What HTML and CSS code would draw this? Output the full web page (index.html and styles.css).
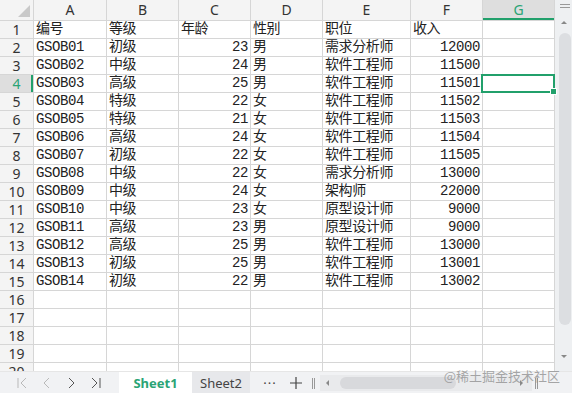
FILE: index.html
```html
<!DOCTYPE html>
<html lang="zh-CN">
<head>
    <meta charset="UTF-8">
    <meta name="viewport" content="width=device-width, initial-scale=1.0">
    <title>Sheet1</title>
    <link rel="stylesheet" href="styles.css">
</head>
<body>
<div class="app">
    <div class="main">
        <div class="sheet">
            <div class="hd corner"></div>
            <div class="hd col">A</div>
            <div class="hd col">B</div>
            <div class="hd col">C</div>
            <div class="hd col">D</div>
            <div class="hd col">E</div>
            <div class="hd col">F</div>
            <div class="hd col sel">G</div>

            <div class="hd row">1</div>
            <div class="c">编号</div><div class="c">等级</div><div class="c">年龄</div><div class="c">性别</div><div class="c">职位</div><div class="c">收入</div><div class="c"></div>

            <div class="hd row">2</div>
            <div class="c">GSOB01</div><div class="c">初级</div><div class="c n">23</div><div class="c">男</div><div class="c">需求分析师</div><div class="c n">12000</div><div class="c"></div>

            <div class="hd row">3</div>
            <div class="c">GSOB02</div><div class="c">中级</div><div class="c n">24</div><div class="c">男</div><div class="c">软件工程师</div><div class="c n">11500</div><div class="c"></div>

            <div class="hd row sel">4</div>
            <div class="c">GSOB03</div><div class="c">高级</div><div class="c n">25</div><div class="c">男</div><div class="c">软件工程师</div><div class="c n">11501</div><div class="c active"></div>

            <div class="hd row">5</div>
            <div class="c">GSOB04</div><div class="c">特级</div><div class="c n">22</div><div class="c">女</div><div class="c">软件工程师</div><div class="c n">11502</div><div class="c"></div>

            <div class="hd row">6</div>
            <div class="c">GSOB05</div><div class="c">特级</div><div class="c n">21</div><div class="c">女</div><div class="c">软件工程师</div><div class="c n">11503</div><div class="c"></div>

            <div class="hd row">7</div>
            <div class="c">GSOB06</div><div class="c">高级</div><div class="c n">24</div><div class="c">女</div><div class="c">软件工程师</div><div class="c n">11504</div><div class="c"></div>

            <div class="hd row">8</div>
            <div class="c">GSOB07</div><div class="c">初级</div><div class="c n">22</div><div class="c">女</div><div class="c">软件工程师</div><div class="c n">11505</div><div class="c"></div>

            <div class="hd row">9</div>
            <div class="c">GSOB08</div><div class="c">中级</div><div class="c n">22</div><div class="c">女</div><div class="c">需求分析师</div><div class="c n">13000</div><div class="c"></div>

            <div class="hd row">10</div>
            <div class="c">GSOB09</div><div class="c">中级</div><div class="c n">24</div><div class="c">女</div><div class="c">架构师</div><div class="c n">22000</div><div class="c"></div>

            <div class="hd row">11</div>
            <div class="c">GSOB10</div><div class="c">中级</div><div class="c n">23</div><div class="c">女</div><div class="c">原型设计师</div><div class="c n">9000</div><div class="c"></div>

            <div class="hd row">12</div>
            <div class="c">GSOB11</div><div class="c">高级</div><div class="c n">23</div><div class="c">男</div><div class="c">原型设计师</div><div class="c n">9000</div><div class="c"></div>

            <div class="hd row">13</div>
            <div class="c">GSOB12</div><div class="c">高级</div><div class="c n">25</div><div class="c">男</div><div class="c">软件工程师</div><div class="c n">13000</div><div class="c"></div>

            <div class="hd row">14</div>
            <div class="c">GSOB13</div><div class="c">初级</div><div class="c n">25</div><div class="c">男</div><div class="c">软件工程师</div><div class="c n">13001</div><div class="c"></div>

            <div class="hd row">15</div>
            <div class="c">GSOB14</div><div class="c">初级</div><div class="c n">22</div><div class="c">男</div><div class="c">软件工程师</div><div class="c n">13002</div><div class="c"></div>

            <div class="hd row">16</div>
            <div class="c"></div><div class="c"></div><div class="c"></div><div class="c"></div><div class="c"></div><div class="c"></div><div class="c"></div>

            <div class="hd row">17</div>
            <div class="c"></div><div class="c"></div><div class="c"></div><div class="c"></div><div class="c"></div><div class="c"></div><div class="c"></div>

            <div class="hd row">18</div>
            <div class="c"></div><div class="c"></div><div class="c"></div><div class="c"></div><div class="c"></div><div class="c"></div><div class="c"></div>

            <div class="hd row">19</div>
            <div class="c"></div><div class="c"></div><div class="c"></div><div class="c"></div><div class="c"></div><div class="c"></div><div class="c"></div>

            <div class="hd row">20</div>
            <div class="c"></div><div class="c"></div><div class="c"></div><div class="c"></div><div class="c"></div><div class="c"></div><div class="c"></div>
        </div>

        <div class="vscroll">
            <div class="split-h"></div>
            <div class="arrow up"></div>
            <div class="vthumb"></div>
            <div class="arrow down"></div>
        </div>
    </div>

    <div class="tabbar">
        <div class="nav">
            <svg class="off" width="25" height="22" viewBox="0 0 25 22"><path d="M9 6v10M17 6l-5 5 5 5" fill="none" stroke="currentColor" stroke-width="1"/></svg>
            <svg class="off" width="25" height="22" viewBox="0 0 25 22"><path d="M15 6l-5 5 5 5" fill="none" stroke="currentColor" stroke-width="1"/></svg>
            <svg width="25" height="22" viewBox="0 0 25 22"><path d="M10 6l5 5-5 5" fill="none" stroke="currentColor" stroke-width="1"/></svg>
            <svg width="25" height="22" viewBox="0 0 25 22"><path d="M8 6l5 5-5 5M16 6v10" fill="none" stroke="currentColor" stroke-width="1"/></svg>
        </div>
        <div class="tab active">Sheet1</div>
        <div class="tab">Sheet2</div>
        <div class="more">···</div>
        <svg class="add" width="26" height="22" viewBox="0 0 26 22"><path d="M7 11h12M13 5v12" fill="none" stroke="#444" stroke-width="1.2"/></svg>
        <div class="split-v"></div>
        <div class="hscroll">
            <div class="harrow left"></div>
            <div class="hthumb"></div>
            <div class="harrow right"></div>
        </div>
        <div class="split-v"></div>
    </div>

    <div class="watermark">@稀土掘金技术社区</div>
</div>
</body>
</html>
```

FILE: styles.css
```css
body {
    margin: 0;
    background: #fff;
    font-family: "Noto Sans", "Noto Sans CJK SC", sans-serif;
}
.app {
    position: relative;
    width: 572px;
    height: 393px;
    overflow: hidden;
}
.main {
    display: flex;
    height: 371px;
    overflow: hidden;
}
.sheet {
    flex: none;
    display: grid;
    grid-template-columns: 33px 72px 71px 71px 71px 87px 71px 71px;
    grid-template-rows: 20px;
    grid-auto-rows: 17px;
    gap: 1px;
    padding-right: 1px;
    width: 554px;
    background: #d6d6d6;
    align-content: start;
}
.hd {
    background: #f4f4f4;
    color: #333;
    font-size: 14px;
    line-height: 17px;
    text-align: center;
}
.hd.col {
    line-height: 20px;
}
.hd.sel {
    background: #dedede;
    color: #2aa475;
}
.hd.col.sel {
    box-shadow: inset 0 -2px 0 #21a06b;
}
.hd.row.sel {
    box-shadow: inset -2px 0 0 #21a06b;
}
.corner {
    position: relative;
}
.corner::after {
    content: "";
    position: absolute;
    right: 3px;
    bottom: 3px;
    border-left: 12px solid transparent;
    border-bottom: 12px solid #c9c9c9;
}
.c {
    background: #fff;
    color: #222;
    font-family: "Liberation Mono", "Noto Sans CJK SC", monospace;
    font-size: 14px;
    letter-spacing: -0.4px;
    line-height: 17px;
    padding: 0 2px;
    white-space: nowrap;
    overflow: hidden;
}
.c.n {
    text-align: right;
}
.c.active {
    position: relative;
    overflow: visible;
}
.c.active::after {
    content: "";
    position: absolute;
    left: -2px;
    top: -1px;
    right: -1px;
    bottom: -1px;
    border: 2px solid #21a06b;
}
.c.active::before {
    content: "";
    position: absolute;
    right: -3px;
    bottom: -3px;
    width: 5px;
    height: 5px;
    background: #21a06b;
    border: 1px solid #fff;
    z-index: 1;
}
.vscroll {
    flex: none;
    width: 17px;
    background: #eef0f2;
    display: flex;
    flex-direction: column;
    align-items: center;
}
.split-h {
    width: 10px;
    height: 2px;
    margin: 4px 0 0 2px;
    border-top: 1px solid #999;
    border-bottom: 1px solid #999;
}
.arrow {
    width: 0;
    height: 0;
    border-left: 3px solid transparent;
    border-right: 3px solid transparent;
}
.arrow.up {
    margin-top: 13px;
    border-bottom: 3px solid #888;
}
.arrow.down {
    margin-top: 30px;
    border-top: 3px solid #888;
}
.vthumb {
    width: 12px;
    height: 292px;
    margin: 9px 0 0 2px;
    border-radius: 6px;
    background: #dcdee1;
}
.tabbar {
    display: flex;
    align-items: center;
    height: 22px;
    background: #f1f2f4;
    border-top: 1px solid #e6e6e6;
    font-size: 13px;
}
.nav {
    display: flex;
    margin-left: 9px;
    width: 110px;
    color: #555;
}
.nav .off {
    color: #b9b9b9;
}
.tab {
    height: 22px;
    line-height: 22px;
    text-align: center;
    color: #444;
}
.tab.active {
    width: 73px;
    background: #fff;
    color: #2aa475;
    font-weight: bold;
}
.tab:not(.active) {
    width: 58px;
    background: #e7e8eb;
}
.more {
    width: 30px;
    margin-left: 5px;
    text-align: center;
    color: #444;
    letter-spacing: 1px;
}
.add {
    margin-left: -2px;
}
.split-v {
    width: 1px;
    height: 11px;
    margin: 0 3px;
    border-left: 1px solid #999;
    border-right: 1px solid #999;
}
.hscroll {
    flex: none;
    width: 212px;
    height: 16px;
    background: #e9eaec;
    display: flex;
    align-items: center;
    margin-left: 2px;
}
.harrow {
    width: 0;
    height: 0;
    border-top: 3px solid transparent;
    border-bottom: 3px solid transparent;
}
.harrow.left {
    margin-left: 6px;
    border-right: 3px solid #888;
}
.harrow.right {
    margin-left: 64px;
    border-left: 3px solid #888;
}
.hthumb {
    width: 116px;
    height: 12px;
    margin-left: 11px;
    border-radius: 6px;
    background: #d8d9dc;
}
.watermark {
    position: absolute;
    right: 12px;
    bottom: 9px;
    font-family: "Noto Sans CJK SC", sans-serif;
    font-size: 13px;
    line-height: 16px;
    color: rgba(140, 140, 140, 0.75);
}
```
